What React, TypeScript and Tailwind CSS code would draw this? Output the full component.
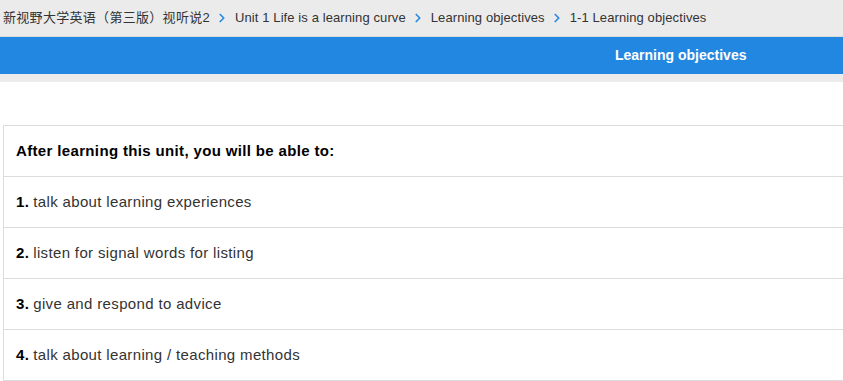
import { ChevronRight } from "lucide-react"

const crumbs = [
  "新视野大学英语（第三版）视听说2",
  "Unit 1 Life is a learning curve",
  "Learning objectives",
  "1-1 Learning objectives",
]

const objectives = [
  "talk about learning experiences",
  "listen for signal words for listing",
  "give and respond to advice",
  "talk about learning / teaching methods",
]

export default function App() {
  return (
    <div className="w-[843px] h-[381px] overflow-hidden bg-white text-[#333] font-['Liberation_Sans','Noto_Sans_CJK_SC',sans-serif]">
      {/* Breadcrumb */}
      <div className="h-[37px] bg-[#ebebeb] flex items-center pl-[3px] text-[13px] tracking-[0.1px] border-b border-[#dadada]">
        {crumbs.map((c, i) => (
          <div key={c} className="flex items-center">
            {i > 0 && <ChevronRight className="w-[14px] h-[14px] ml-[5px] mr-[6px] text-[#2a8ae0]" strokeWidth={3} />}
            <span className={i === 0 ? "tracking-[0.3px]" : ""}>{c}</span>
          </div>
        ))}
      </div>

      {/* Title bar */}
      <div className="h-[37px] bg-[#2287e0] flex items-center pl-[615px] text-white text-[14px] font-bold">
        Learning objectives
      </div>
      <div className="h-[8px] bg-[#ebebeb]" />

      {/* Objectives table */}
      <div className="mt-[43px] ml-[3px] w-[860px] border-l border-t border-[#dcdcdc] text-[15px] tracking-[0.35px]">
        <div className="h-[51px] border-b border-[#dcdcdc] flex items-center pl-[12px] font-bold text-black">
          After learning this unit, you will be able to:
        </div>
        {objectives.map((o, i) => (
          <div key={o} className="h-[51px] border-b border-[#dcdcdc] flex items-center pl-[12px]">
            <span className="font-bold text-black mr-[4px]">{i + 1}.</span>
            <span>{o}</span>
          </div>
        ))}
      </div>
    </div>
  )
}
